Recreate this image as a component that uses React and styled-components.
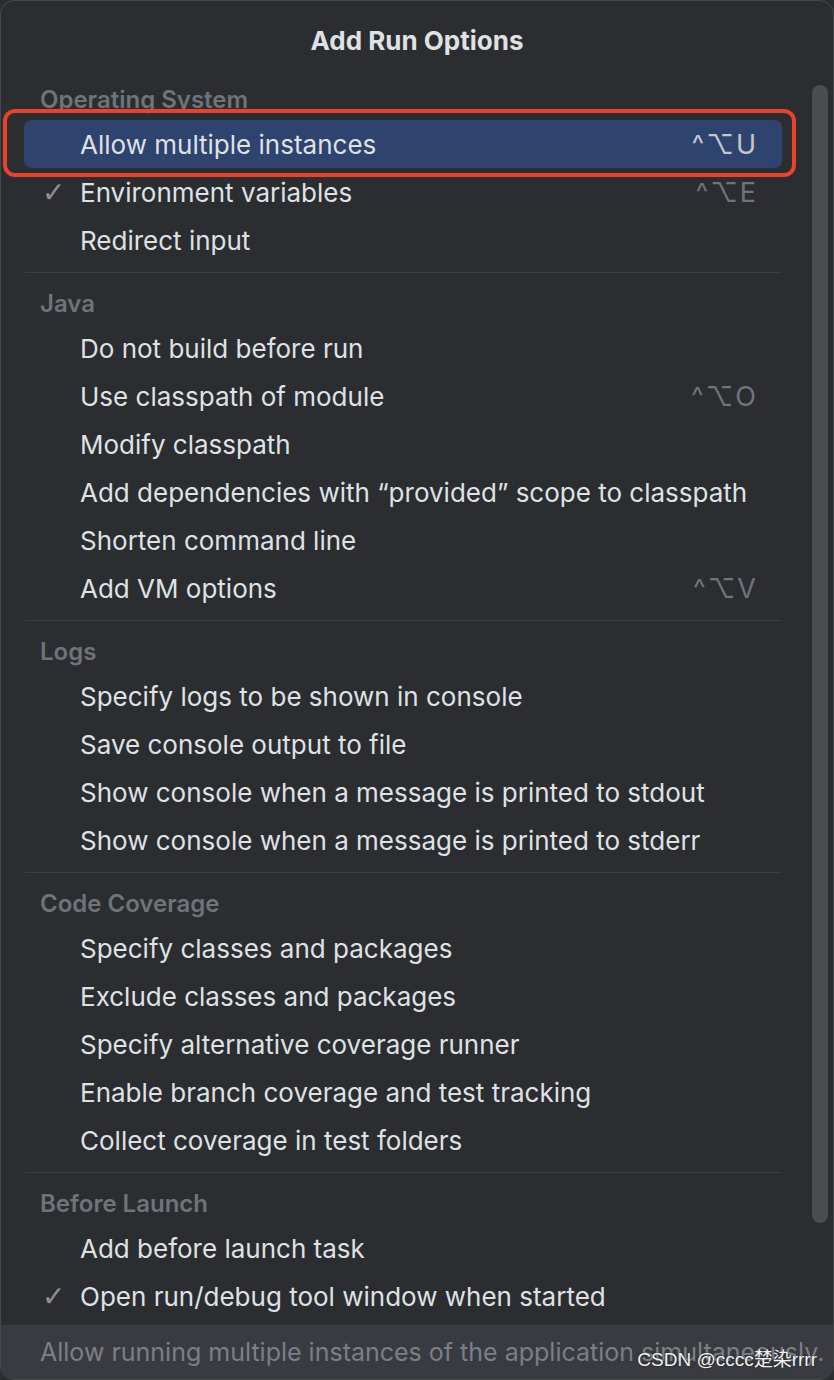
import React from "react";
import styled, { createGlobalStyle } from "styled-components";

const Global = createGlobalStyle`
  html, body { margin: 0; padding: 0; background: #2b2d30; }
  body { font-family: Inter, "Noto Sans", sans-serif; -webkit-font-smoothing: antialiased; }
  * { box-sizing: border-box; }
`;

const Panel = styled.div`
  position: relative;
  width: 834px;
  height: 1380px;
  background: #2b2d30;
  border: 1px solid #46484c;
  border-radius: 14px;
  overflow: hidden;
  display: flex;
  flex-direction: column;
`;

const Title = styled.div`
  height: 74px;
  display: flex;
  align-items: center;
  justify-content: center;
  padding-top: 6px;
  color: #dfe1e5;
  font-size: 26px;
  font-weight: 700;
`;

const List = styled.div`
  flex: 1;
  padding: 0 51px 0 23px;
  display: flex;
  flex-direction: column;
`;

const Header = styled.div`
  height: 46px;
  display: flex;
  align-items: center;
  padding-left: 16px;
  padding-top: 4px;
  color: #6f737a;
  font-size: 24px;
  font-weight: 600;
`;

const Row = styled.div`
  position: relative;
  height: 48px;
  display: flex;
  align-items: center;
  padding: 0 26px 0 18px;
  border-radius: 7px;
  background: ${(p) => (p.$selected ? "#2e436e" : "transparent")};
  color: #dfe1e5;
  font-size: 26px;
  ${(p) =>
    p.$selected &&
    `
    &::after {
      content: "";
      position: absolute;
      left: -21px;
      right: -14px;
      top: -11px;
      bottom: -9px;
      border: 4px solid #e8432b;
      border-radius: 12px;
      pointer-events: none;
    }
  `}
`;

const Check = styled.span`
  width: 38px;
  flex: none;
  color: #8d9096;
  font-size: 28px;
  font-family: "DejaVu Sans", sans-serif;
`;

const Label = styled.span`
  flex: 1;
  white-space: nowrap;
`;

const Shortcut = styled.span`
  color: ${(p) => (p.$selected ? "#c4c7cd" : "#6f737a")};
  font-size: 27px;
  letter-spacing: 2px;
  margin-right: -2px;
  white-space: nowrap;
  font-family: Inter, "DejaVu Sans", sans-serif;
`;

const Separator = styled.div`
  height: 1px;
  background: #3c3e42;
  margin: 8px 0 5px 1px;
`;

const Footer = styled.div`
  height: 54px;
  margin-top: 5px;
  background: #393b40;
  display: flex;
  align-items: center;
  padding-left: 39px;
  color: #7c7f86;
  font-size: 25px;
  white-space: nowrap;
  overflow: hidden;
`;

const Thumb = styled.div`
  position: absolute;
  left: 811px;
  top: 84px;
  width: 16px;
  height: 1138px;
  border-radius: 8px;
  background: #4b4c4f;
`;

const Watermark = styled.div`
  position: absolute;
  right: 16px;
  bottom: 8px;
  color: #f2f2f2;
  font-family: "Liberation Sans", "Noto Sans CJK SC", sans-serif;
  font-size: 19px;
  text-shadow: 0 0 2px rgba(0, 0, 0, 0.6);
  white-space: nowrap;
`;

const sections = [
  {
    title: "Operating System",
    items: [
      { label: "Allow multiple instances", shortcut: "^⌥U", selected: true },
      { label: "Environment variables", shortcut: "^⌥E", checked: true },
      { label: "Redirect input" },
    ],
  },
  {
    title: "Java",
    items: [
      { label: "Do not build before run" },
      { label: "Use classpath of module", shortcut: "^⌥O" },
      { label: "Modify classpath" },
      { label: "Add dependencies with “provided” scope to classpath" },
      { label: "Shorten command line" },
      { label: "Add VM options", shortcut: "^⌥V" },
    ],
  },
  {
    title: "Logs",
    items: [
      { label: "Specify logs to be shown in console" },
      { label: "Save console output to file" },
      { label: "Show console when a message is printed to stdout" },
      { label: "Show console when a message is printed to stderr" },
    ],
  },
  {
    title: "Code Coverage",
    items: [
      { label: "Specify classes and packages" },
      { label: "Exclude classes and packages" },
      { label: "Specify alternative coverage runner" },
      { label: "Enable branch coverage and test tracking" },
      { label: "Collect coverage in test folders" },
    ],
  },
  {
    title: "Before Launch",
    items: [
      { label: "Add before launch task" },
      { label: "Open run/debug tool window when started", checked: true },
    ],
  },
];

export default function App() {
  return (
    <>
      <Global />
      <Panel>
        <Title>Add Run Options</Title>
        <List>
          {sections.map((s, i) => (
            <React.Fragment key={s.title}>
              {i > 0 && <Separator />}
              <Header>{s.title}</Header>
              {s.items.map((it) => (
                <Row key={it.label} $selected={it.selected}>
                  <Check>{it.checked ? "✓" : ""}</Check>
                  <Label>{it.label}</Label>
                  {it.shortcut && <Shortcut $selected={it.selected}>{it.shortcut}</Shortcut>}
                </Row>
              ))}
            </React.Fragment>
          ))}
        </List>
        <Footer>Allow running multiple instances of the application simultaneously.</Footer>
        <Thumb />
        <Watermark>CSDN @cccc楚染rrrr</Watermark>
      </Panel>
    </>
  );
}
